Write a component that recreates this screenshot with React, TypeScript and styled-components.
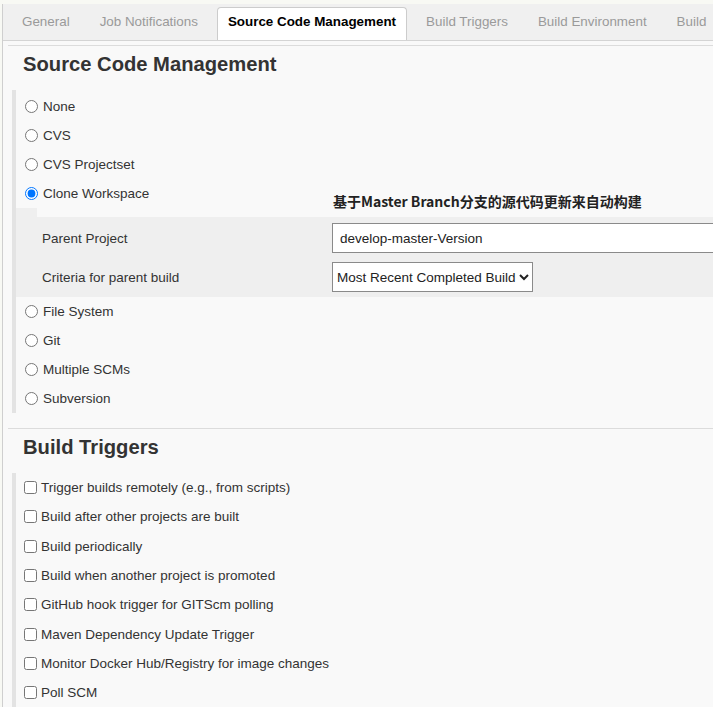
import React, { FC } from 'react';
import styled, { createGlobalStyle } from 'styled-components';

const GlobalStyle = createGlobalStyle`
  html, body {
    margin: 0;
    padding: 0;
    background: #f8f9f4;
    overflow: hidden;
  }
  body {
    font-family: "Liberation Sans", Arial, sans-serif;
    font-size: 13.5px;
    color: #333;
  }
`;

const TABS = [
  'General',
  'Job Notifications',
  'Source Code Management',
  'Build Triggers',
  'Build Environment',
  'Build',
];

const SCM_OPTIONS_BEFORE = ['None', 'CVS', 'CVS Projectset'];
const SCM_OPTIONS_AFTER = ['File System', 'Git', 'Multiple SCMs', 'Subversion'];

const TRIGGERS = [
  'Trigger builds remotely (e.g., from scripts)',
  'Build after other projects are built',
  'Build periodically',
  'Build when another project is promoted',
  'GitHub hook trigger for GITScm polling',
  'Maven Dependency Update Trigger',
  'Monitor Docker Hub/Registry for image changes',
  'Poll SCM',
];

const App: FC = () => {
  return (
    <>
      <GlobalStyle />
      <StyledPage>
        <StyledFrame>
          <StyledTabBar>
            {TABS.map((tab) => (
              <StyledTab key={tab} $active={tab === 'Source Code Management'}>
                {tab}
              </StyledTab>
            ))}
          </StyledTabBar>

          <StyledContent>
            <StyledSection>
              <StyledHeading>Source Code Management</StyledHeading>
              <StyledSectionBody>
                <StyledRadioGroup>
                  {SCM_OPTIONS_BEFORE.map((opt) => (
                    <StyledChoiceRow key={opt}>
                      <StyledRadio type="radio" name="scm" />
                      <span>{opt}</span>
                    </StyledChoiceRow>
                  ))}
                  <StyledChoiceRow>
                    <StyledChoiceLabel>
                      <StyledRadio type="radio" name="scm" defaultChecked />
                      <span>Clone Workspace</span>
                    </StyledChoiceLabel>
                    <StyledNote>基于Master Branch分支的源代码更新来自动构建</StyledNote>
                  </StyledChoiceRow>
                  <StyledNested>
                    <StyledNestedTab />
                    <StyledNestedBody>
                      <StyledFieldRow>
                        <StyledFieldLabel>Parent Project</StyledFieldLabel>
                        <StyledInput type="text" defaultValue="develop-master-Version" />
                      </StyledFieldRow>
                      <StyledFieldRow>
                        <StyledFieldLabel>Criteria for parent build</StyledFieldLabel>
                        <div>
                          <StyledSelect defaultValue="completed">
                            <option value="completed">Most Recent Completed Build</option>
                            <option value="successful">Most Recent Successful Build</option>
                          </StyledSelect>
                        </div>
                      </StyledFieldRow>
                    </StyledNestedBody>
                  </StyledNested>
                  {SCM_OPTIONS_AFTER.map((opt) => (
                    <StyledChoiceRow key={opt}>
                      <StyledRadio type="radio" name="scm" />
                      <span>{opt}</span>
                    </StyledChoiceRow>
                  ))}
                </StyledRadioGroup>
              </StyledSectionBody>
            </StyledSection>

            <StyledSection>
              <StyledHeading>Build Triggers</StyledHeading>
              <StyledSectionBody>
                {TRIGGERS.map((t) => (
                  <StyledCheckRow key={t}>
                    <StyledCheckbox type="checkbox" />
                    <span>{t}</span>
                  </StyledCheckRow>
                ))}
              </StyledSectionBody>
            </StyledSection>
          </StyledContent>
        </StyledFrame>
      </StyledPage>
    </>
  );
};

const StyledPage = styled.div`
  padding-top: 4px;
  width: 713px;
  height: 707px;
  box-sizing: border-box;
`;

const StyledFrame = styled.div`
  margin-left: 2px;
  border-left: 1px solid #cfcfcf;
  height: 100%;
  background: #f9f9f9;
`;

const StyledTabBar = styled.div`
  display: flex;
  align-items: flex-end;
  gap: 8px;
  height: 36px;
  padding-left: 8px;
  background: #f0f0f0;
  border-bottom: 1px solid #d4d4d4;
  white-space: nowrap;
  overflow: hidden;
`;

const StyledTab = styled.div<{ $active?: boolean }>`
  flex: none;
  box-sizing: border-box;
  height: 34px;
  line-height: 27px;
  padding: 0 10px;
  font-size: 13.4px;
  color: ${(p) => (p.$active ? '#000' : '#9a9a9a')};
  font-weight: ${(p) => (p.$active ? 'bold' : 'normal')};
  background: ${(p) => (p.$active ? '#fff' : 'transparent')};
  border: 1px solid ${(p) => (p.$active ? '#cccccc' : 'transparent')};
  border-bottom: none;
  border-radius: 4px 4px 0 0;
  margin-bottom: -1px;
`;

const StyledContent = styled.div`
  padding-left: 5px;
  padding-top: 4px;
`;

const StyledSection = styled.div`
  border-top: 1px solid #dcdcdc;
  & + & {
    margin-top: 15px;
  }
`;

const StyledHeading = styled.h2`
  margin: 6px 0 14px;
  padding-left: 15px;
  font-size: 20.2px;
  line-height: 24px;
  font-weight: bold;
  color: #333;
`;

const StyledSectionBody = styled.div`
  margin-left: 4px;
  border-left: 4px solid #e3e3e3;
`;

const StyledRadioGroup = styled.div`
  padding-top: 2px;
`;

const StyledChoiceRow = styled.div`
  display: flex;
  align-items: center;
  height: 29px;
  padding-left: 9px;
  color: #333;
`;

const StyledChoiceLabel = styled.div`
  display: flex;
  align-items: center;
  width: 308px;
`;

const StyledNote = styled.div`
  margin-top: 14px;
  line-height: 16px;
  font-family: "Noto Sans CJK SC", "Liberation Sans", sans-serif;
  font-weight: bold;
  font-size: 14px;
  color: #222;
  white-space: nowrap;
`;

const StyledRadio = styled.input`
  width: 13px;
  height: 13px;
  margin: 0 5px 0 0;
`;

const StyledNested = styled.div``;

const StyledNestedTab = styled.div`
  width: 21px;
  height: 9px;
  background: #efefef;
`;

const StyledNestedBody = styled.div`
  display: flex;
  flex-direction: column;
  gap: 9px;
  padding: 6px 0 5px;
  background: #efefef;
`;

const StyledFieldRow = styled.div`
  display: grid;
  grid-template-columns: 316px 1fr;
  align-items: center;
  height: 30px;
`;

const StyledFieldLabel = styled.div`
  padding-left: 26px;
  color: #333;
`;

const StyledInput = styled.input`
  box-sizing: border-box;
  width: 420px;
  height: 30px;
  padding: 0 7px;
  border: 1px solid #8a8a8a;
  border-radius: 0;
  background: #fff;
  font-family: "Liberation Sans", Arial, sans-serif;
  font-size: 13.5px;
  color: #222;
  outline: none;
`;

const StyledSelect = styled.select`
  box-sizing: border-box;
  height: 30px;
  padding: 0;
  border: 1px solid #8a8a8a;
  border-radius: 0;
  background: #fff;
  font-family: "Liberation Sans", Arial, sans-serif;
  font-size: 13.5px;
  color: #222;
`;

const StyledCheckRow = styled.div`
  display: flex;
  align-items: center;
  height: 29.3px;
  padding-left: 8px;
  color: #333;
`;

const StyledCheckbox = styled.input`
  width: 13px;
  height: 13px;
  margin: 0 4px 0 0;
`;

export default App;
